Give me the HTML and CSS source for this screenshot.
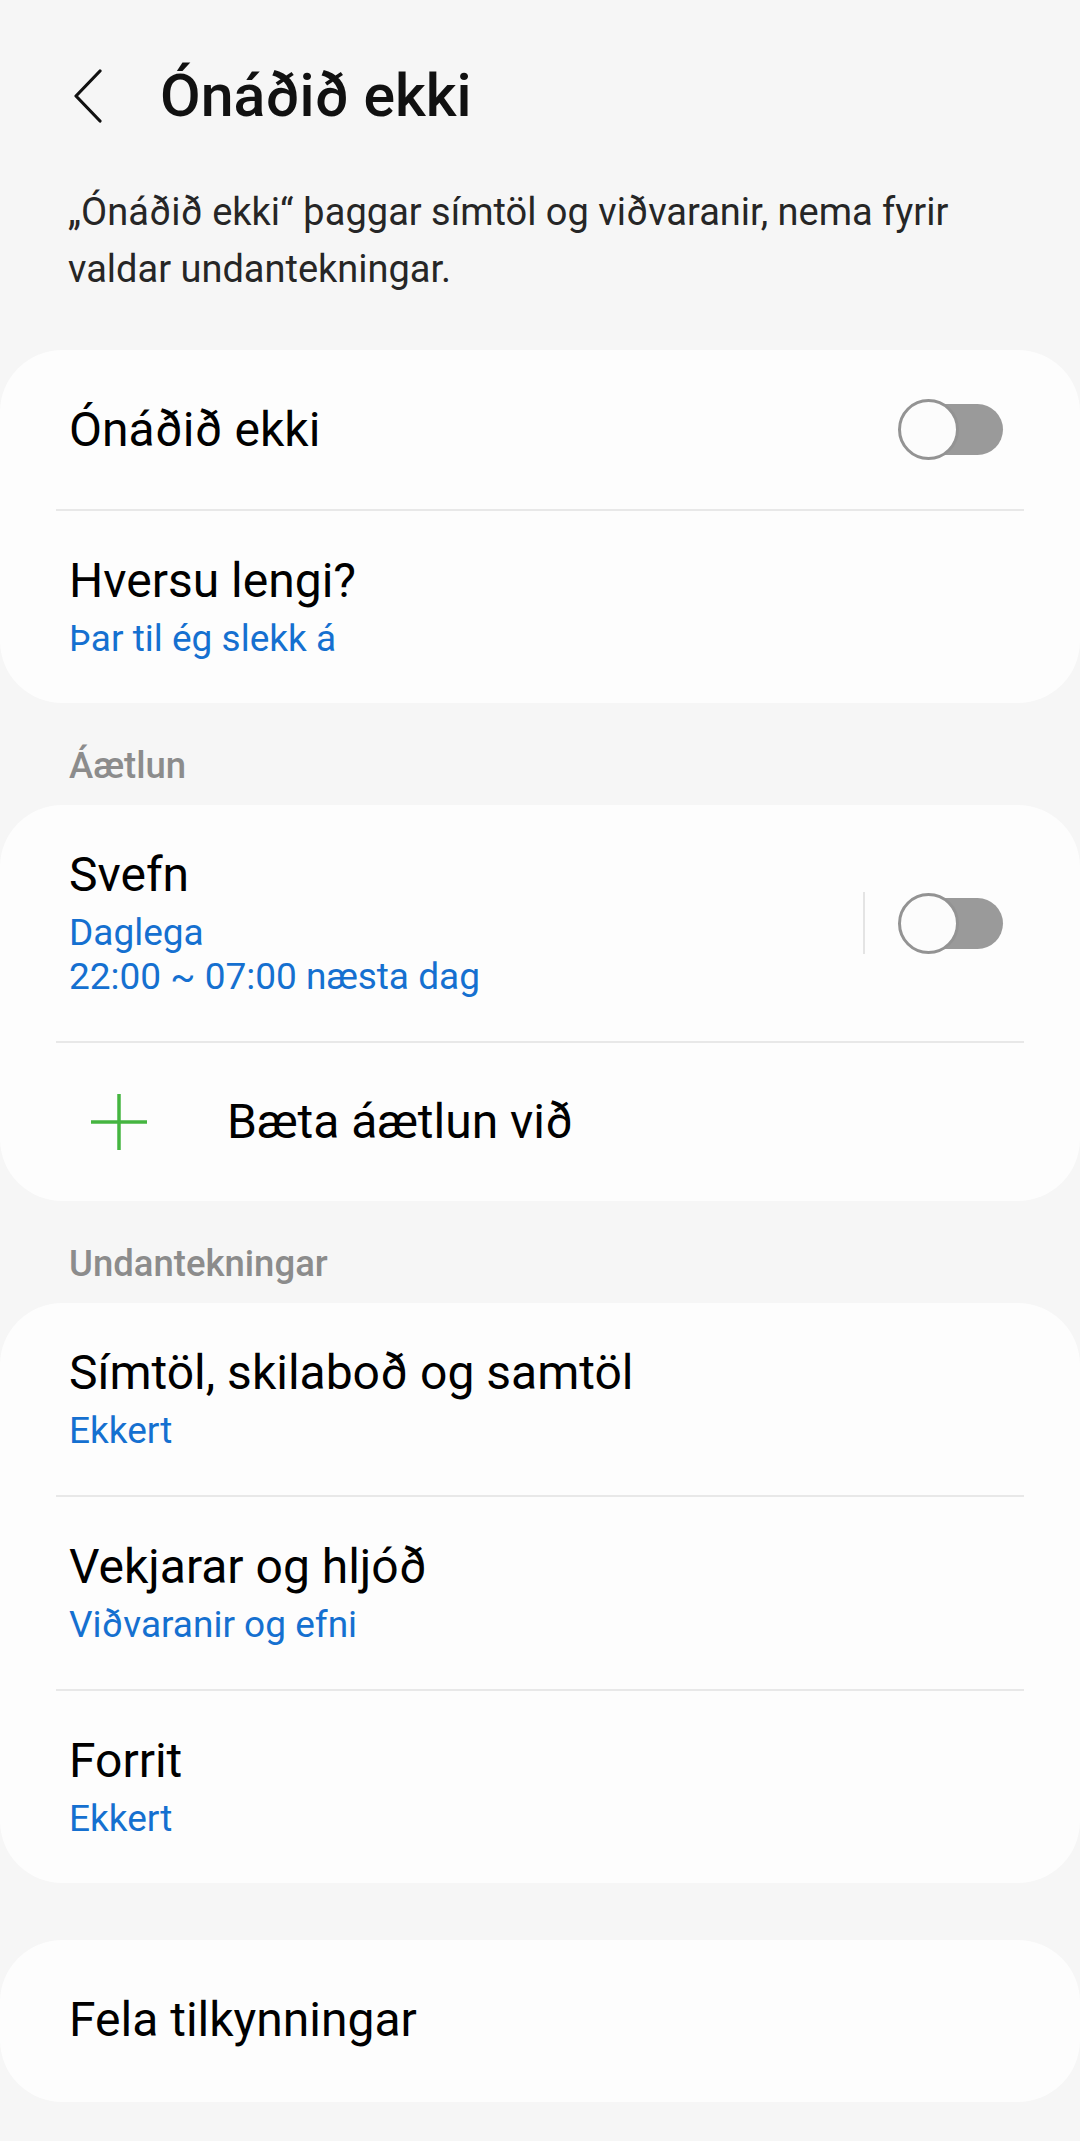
FILE: index.html
```html
<!DOCTYPE html>
<html lang="is">
<head>
    <meta charset="UTF-8">
    <meta name="viewport" content="width=device-width, initial-scale=1.0">
    <title>Ónáðið ekki</title>
    <link rel="stylesheet" href="styles.css">
</head>
<body>
    <!-- Efsta stika -->
    <div class="topbar">
        <span class="back">
            <svg width="30" height="54" viewBox="0 0 30 54">
                <polyline points="27,2 3,27 27,52" fill="none" stroke="#111" stroke-width="3.2" stroke-linecap="round" stroke-linejoin="round"/>
            </svg>
        </span>
        <h1>Ónáðið ekki</h1>
    </div>

    <p class="intro">„Ónáðið ekki“ þaggar símtöl og viðvaranir, nema fyrir valdar undantekningar.</p>

    <div class="card">
        <div class="item single first">
            <div class="item-text">
                <div class="item-title">Ónáðið ekki</div>
            </div>
            <span class="switch"><span class="thumb"></span></span>
        </div>
        <div class="divider"></div>
        <div class="item">
            <div class="item-text">
                <div class="item-title">Hversu lengi?</div>
                <div class="item-sub">Þar til ég slekk á</div>
            </div>
        </div>
    </div>

    <div class="section-label">Áætlun</div>
    <div class="card">
        <div class="item">
            <div class="item-text">
                <div class="item-title">Svefn</div>
                <div class="item-sub">Daglega</div>
                <div class="item-sub tight">22:00 ~ 07:00 næsta dag</div>
            </div>
            <span class="vline"></span>
            <span class="switch"><span class="thumb"></span></span>
        </div>
        <div class="divider"></div>
        <div class="item add-row">
            <span class="plus">
                <svg width="58" height="58" viewBox="0 0 58 58">
                    <line x1="29" y1="1" x2="29" y2="57" stroke="#45b540" stroke-width="3.5"/>
                    <line x1="1" y1="29" x2="57" y2="29" stroke="#45b540" stroke-width="3.5"/>
                </svg>
            </span>
            <div class="item-title">Bæta áætlun við</div>
        </div>
    </div>

    <div class="section-label">Undantekningar</div>
    <div class="card">
        <div class="item">
            <div class="item-text">
                <div class="item-title">Símtöl, skilaboð og samtöl</div>
                <div class="item-sub">Ekkert</div>
            </div>
        </div>
        <div class="divider"></div>
        <div class="item">
            <div class="item-text">
                <div class="item-title">Vekjarar og hljóð</div>
                <div class="item-sub">Viðvaranir og efni</div>
            </div>
        </div>
        <div class="divider"></div>
        <div class="item">
            <div class="item-text">
                <div class="item-title">Forrit</div>
                <div class="item-sub">Ekkert</div>
            </div>
        </div>
    </div>

    <div class="card last">
        <div class="item single tall">
            <div class="item-text">
                <div class="item-title">Fela tilkynningar</div>
            </div>
        </div>
    </div>
</body>
</html>
```

FILE: styles.css
```css
* {
    margin: 0;
    padding: 0;
    box-sizing: border-box;
}

body {
    font-family: Roboto, "Noto Sans", sans-serif;
    background-color: #f6f6f6;
    color: #000;
    width: 1080px;
}

.topbar {
    display: flex;
    align-items: center;
    height: 112px;
    margin-top: 40px;
    padding-left: 73px;
}

.back {
    display: flex;
    width: 30px;
    height: 54px;
}

.topbar h1 {
    margin-left: 57px;
    font-size: 59px;
    font-weight: 500;
    line-height: 64px;
    color: #111;
}

.intro {
    margin-top: 32px;
    padding: 0 50px 0 68px;
    font-size: 38px;
    line-height: 57px;
    color: #262626;
}

.card {
    background-color: #fdfdfd;
    border-radius: 62px;
    margin-top: 52px;
}

.card.last {
    margin-top: 57px;
}

.section-label {
    padding: 43px 69px 19px;
    font-size: 36.5px;
    font-weight: 500;
    line-height: 40px;
    color: #8c8c8c;
}

.section-label + .card {
    margin-top: 0;
}

.item {
    display: flex;
    align-items: center;
    padding: 42px 77px 42px 69px;
}

.item.single {
    padding-top: 51px;
    padding-bottom: 51px;
}

.item.first {
    padding-top: 49px;
    padding-bottom: 49px;
}

.item.tall {
    padding-top: 52px;
    padding-bottom: 54px;
}

.item-text {
    flex: 1;
}

.item-title {
    font-size: 48px;
    line-height: 56px;
    color: #000;
}

.item-sub {
    margin-top: 8px;
    font-size: 37px;
    line-height: 44px;
    color: #1570d0;
}

.item-sub.tight {
    margin-top: 0;
}

.divider {
    height: 2px;
    margin: 0 56px;
    background-color: #e8e8e8;
}

.vline {
    width: 2px;
    height: 62px;
    margin-right: 33px;
    background-color: #e4e4e4;
}

.switch {
    position: relative;
    display: block;
    width: 105px;
    height: 61px;
}

.switch::before {
    content: "";
    position: absolute;
    left: 7px;
    right: 0;
    top: 5px;
    height: 51px;
    border-radius: 26px;
    background-color: #9a9a9a;
}

.thumb {
    position: absolute;
    left: 0;
    top: 0;
    width: 61px;
    height: 61px;
    border-radius: 50%;
    border: 3px solid #939393;
    background-color: #fcfcfc;
}

.add-row {
    padding: 50px 69px 50px 90px;
}

.plus {
    display: flex;
    width: 58px;
    height: 58px;
    margin-right: 79px;
}
```
